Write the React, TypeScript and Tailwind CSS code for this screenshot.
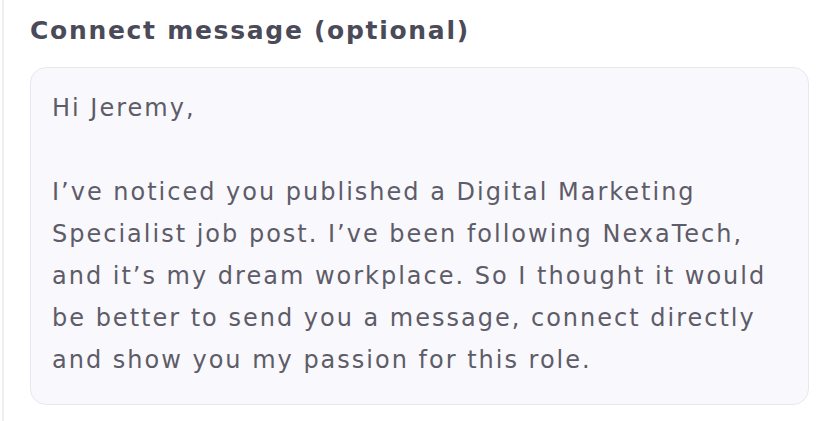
const lines = [
  "Hi Jeremy,",
  "",
  "I’ve noticed you published a Digital Marketing",
  "Specialist job post. I’ve been following NexaTech,",
  "and it’s my dream workplace. So I thought it would",
  "be better to send you a message, connect directly",
  "and show you my passion for this role.",
];

export default function App() {
  return (
    <div className="h-[421px] w-[831px] bg-white font-['DejaVu_Sans',sans-serif]">
      <div className="h-full ml-[2px] border-l-2 border-[#efeff1] pl-[26px] pr-[22px] pt-[12px]">
        <h2 className="text-[25px] leading-[37px] font-bold tracking-[1.7px] text-[#4b4a59]">
          Connect message (optional)
        </h2>
        <div className="mt-[18px] rounded-[16px] border border-[#e9e8ef] bg-[#f9f8fd] pl-[21px] pr-4 pt-[19px] pb-[23px]">
          {lines.map((l, i) => (
            <p key={i} className="h-[42px] text-[24px] leading-[42px] tracking-[2px] text-[#5d5c68] whitespace-nowrap">
              {l}
            </p>
          ))}
        </div>
      </div>
    </div>
  );
}
